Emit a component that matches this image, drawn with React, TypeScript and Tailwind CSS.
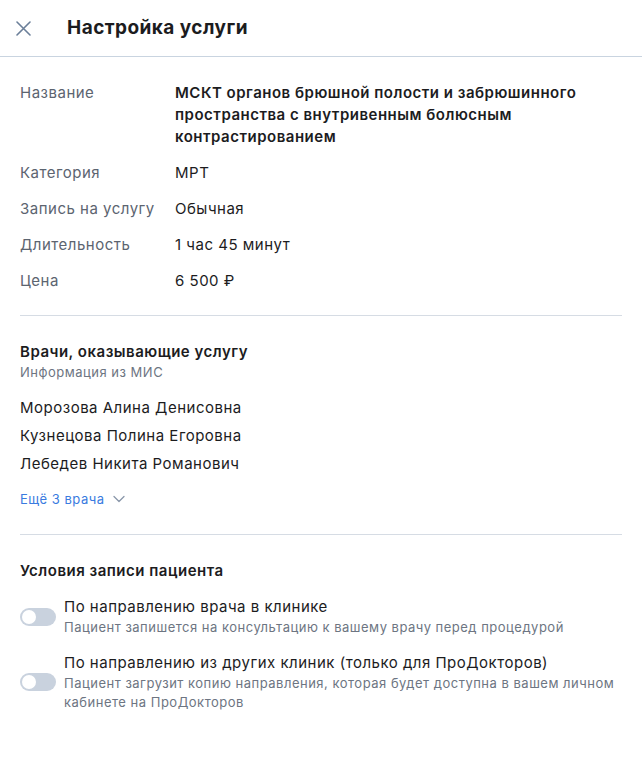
import React from "react";

const rows: [string, string][] = [
  ["Категория", "МРТ"],
  ["Запись на услугу", "Обычная"],
  ["Длительность", "1 час 45 минут"],
  ["Цена", "6 500 ₽"],
];

function Toggle() {
  return (
    <div className="relative h-[18px] w-[36px] shrink-0 rounded-full bg-[#c9d2de]">
      <div className="absolute left-[2px] top-[2px] h-[14px] w-[14px] rounded-full bg-white" />
    </div>
  );
}

export default function App() {
  return (
    <div className="min-h-screen bg-white tracking-[0.5px] text-[#1c1c1e]" style={{ fontFamily: "Inter, 'Noto Sans', sans-serif" }}>
      <div className="flex h-[57px] items-center border-b border-[#c9d4e0] pl-4">
        <svg width="15" height="15" viewBox="0 0 15 15" className="mt-[1px]">
          <path d="M1 1L14 14M14 1L1 14" stroke="#6b7f99" strokeWidth="1.6" strokeLinecap="round" />
        </svg>
        <div className="ml-[36px] text-[19px] font-bold tracking-[0.45px] text-[#1c1c1e]">Настройка услуги</div>
      </div>

      <div className="px-5 pt-[25px]">
        <div className="grid grid-cols-[155px_1fr] gap-y-[14px] text-[15px] leading-[22px]">
          <div className="text-[#5c6470]">Название</div>
          <div className="font-semibold">
            МСКТ органов брюшной полости и забрюшинного пространства с внутривенным болюсным контрастированием
          </div>
          {rows.map(([k, v]) => (
            <React.Fragment key={k}>
              <div className="text-[#5c6470]">{k}</div>
              <div>{v}</div>
            </React.Fragment>
          ))}
        </div>

        <div className="mt-[23px] h-px bg-[#d6dce4]" />

        <div className="pt-[25px]">
          <div className="text-[15px] font-semibold leading-[22px]">Врачи, оказывающие услугу</div>
          <div className="text-[13px] leading-[18px] text-[#6d7582]">Информация из МИС</div>
          <div className="mt-[16px] flex flex-col gap-[6px] text-[15px] leading-[22px]">
            <div>Морозова Алина Денисовна</div>
            <div>Кузнецова Полина Егоровна</div>
            <div>Лебедев Никита Романович</div>
          </div>
          <div className="mt-[14px] flex items-center gap-[8px] text-[13px] leading-[20px] text-[#3a7be0]">
            <span>Ещё 3 врача</span>
            <svg width="12" height="8" viewBox="0 0 12 8">
              <path d="M1 1.5L6 6.5L11 1.5" stroke="#8a97aa" strokeWidth="1.3" fill="none" strokeLinecap="round" strokeLinejoin="round" />
            </svg>
          </div>
        </div>

        <div className="mt-[25px] h-px bg-[#d6dce4]" />

        <div className="pt-[25px]">
          <div className="text-[15px] font-semibold leading-[22px]">Условия записи пациента</div>
          <div className="mt-[14px] flex items-center gap-[8px]">
            <Toggle />
            <div>
              <div className="text-[15px] leading-[22px]">По направлению врача в клинике</div>
              <div className="text-[13px] leading-[19px] text-[#6d7582]">
                Пациент запишется на консультацию к вашему врачу перед процедурой
              </div>
            </div>
          </div>
          <div className="mt-[15px] flex items-center gap-[8px]">
            <Toggle />
            <div>
              <div className="text-[15px] leading-[22px]">По направлению из других клиник (только для ПроДокторов)</div>
              <div className="text-[13px] leading-[19px] text-[#6d7582]">
                Пациент загрузит копию направления, которая будет доступна в вашем личном кабинете на ПроДокторов
              </div>
            </div>
          </div>
        </div>
      </div>
    </div>
  );
}
